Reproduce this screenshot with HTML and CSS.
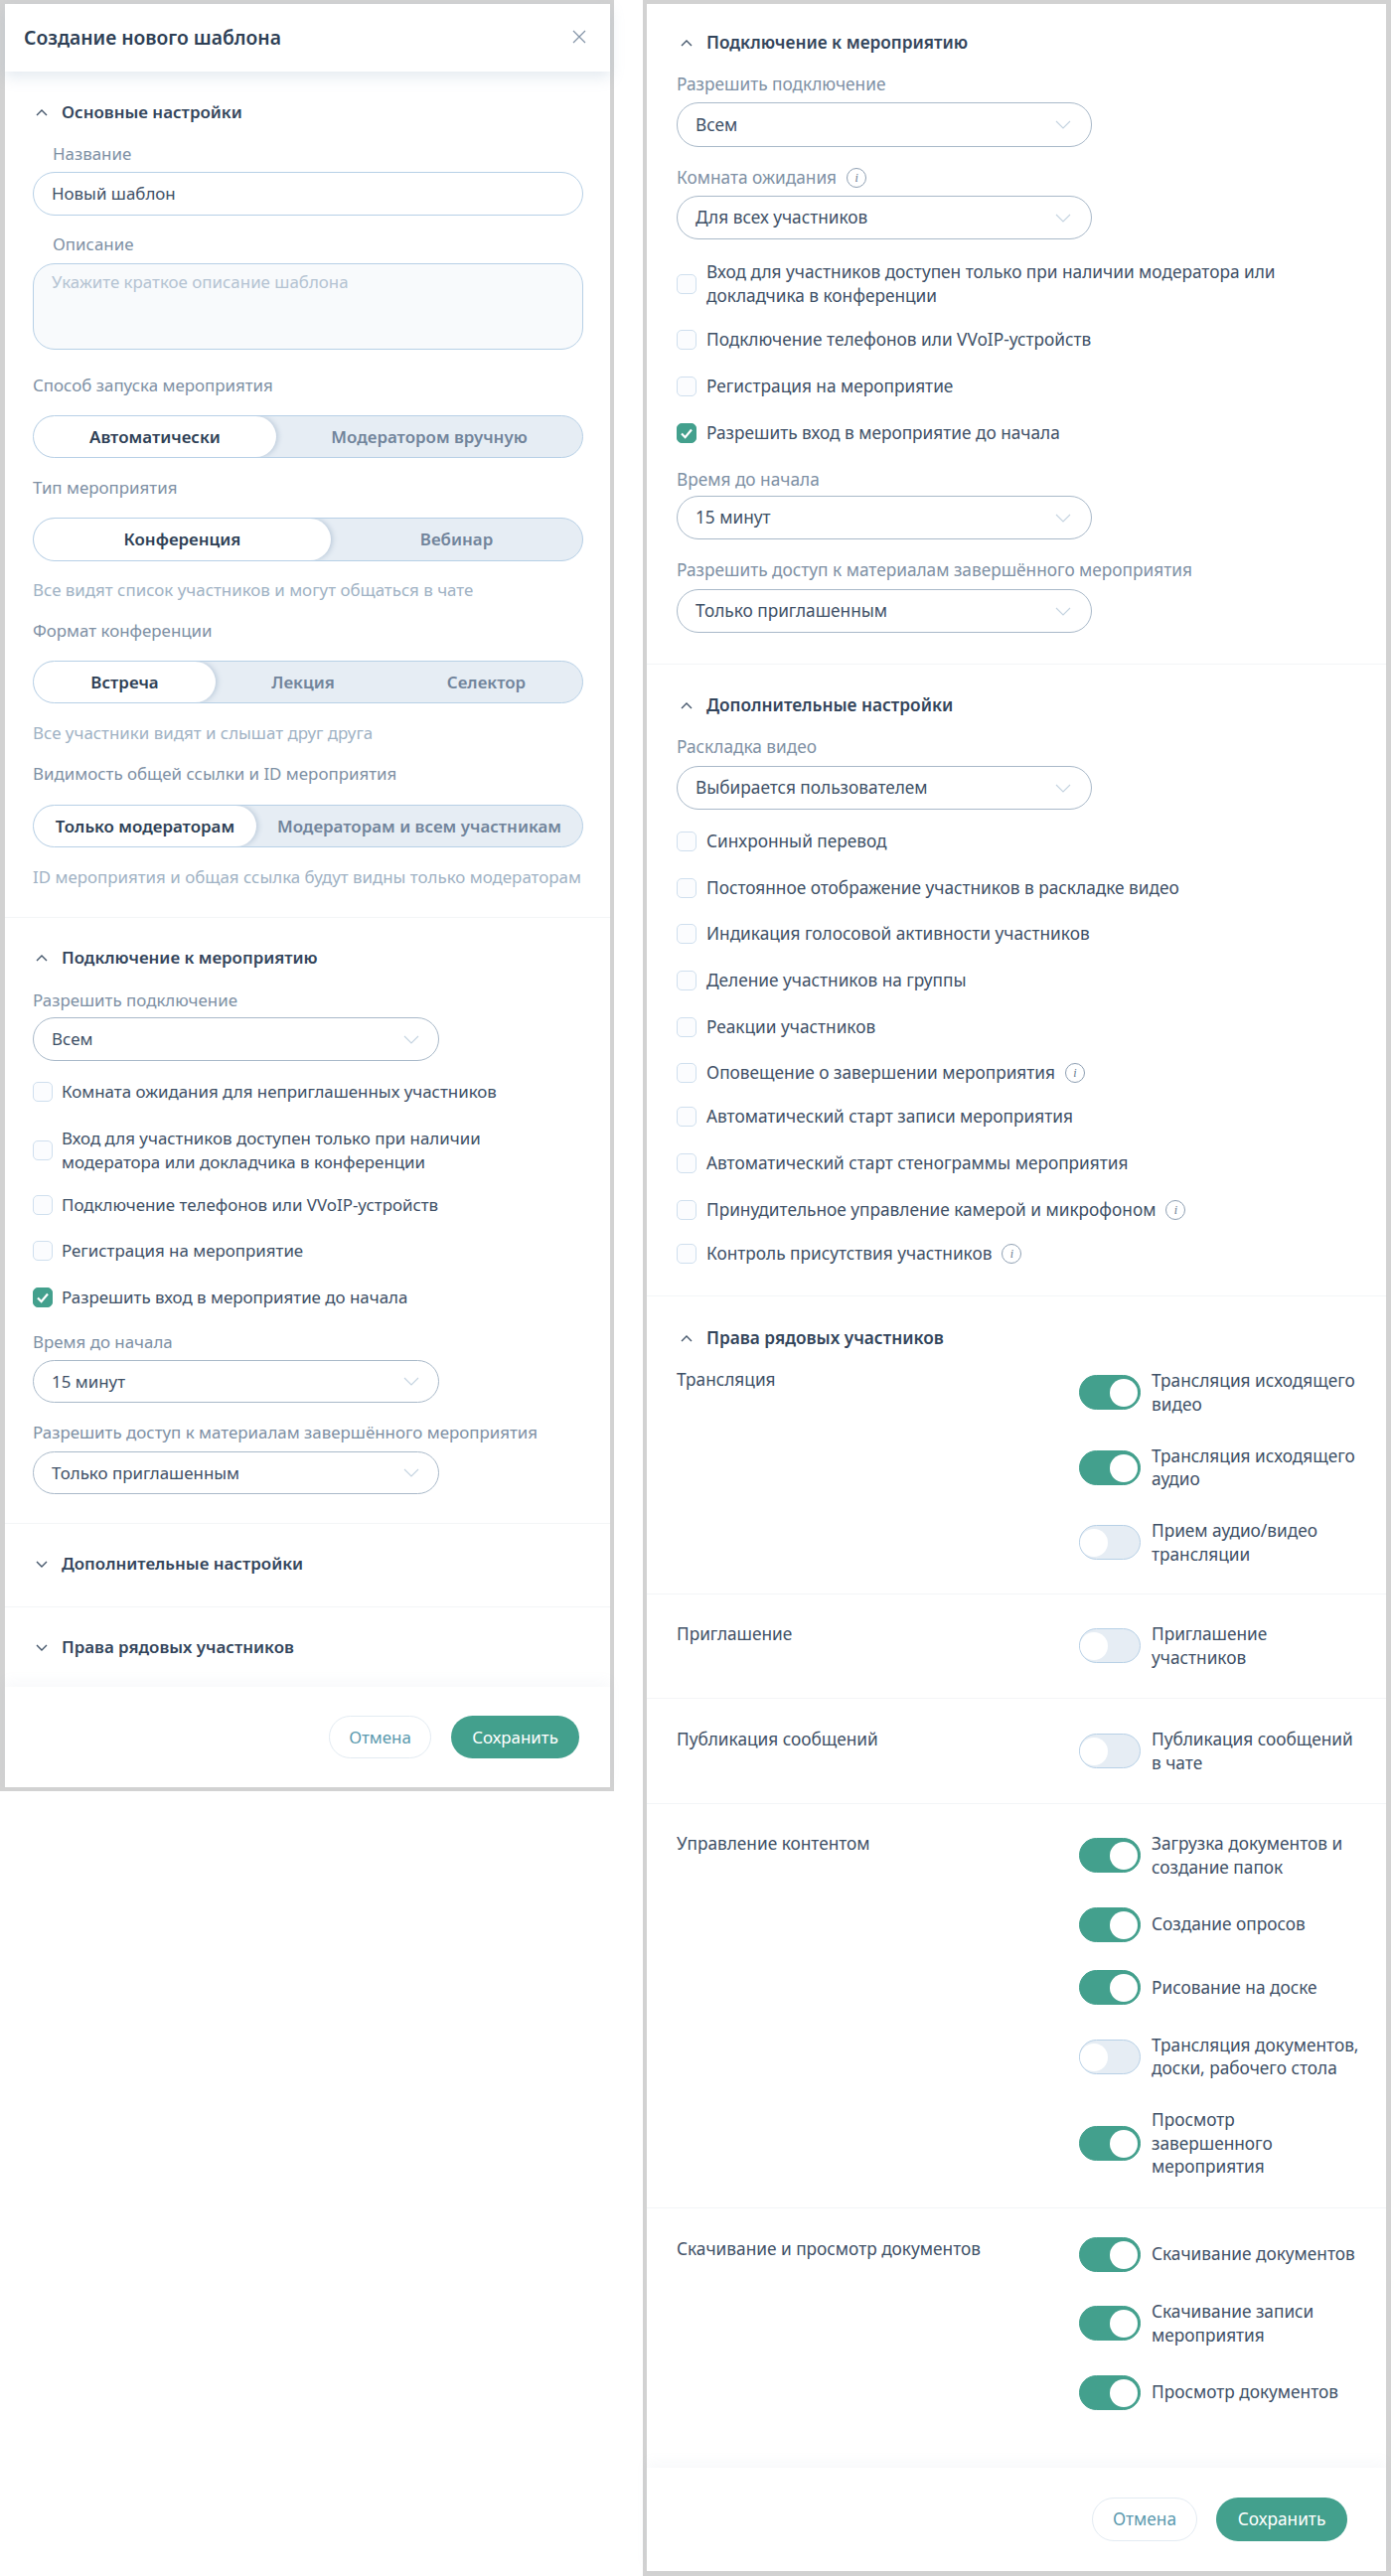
FILE: index.html
```html
<!DOCTYPE html>
<html lang="ru">
<head>
<meta charset="utf-8">
<title>Создание нового шаблона</title>
<link rel="stylesheet" href="styles.css">
</head>
<body>
<svg class="defs" width="0" height="0" aria-hidden="true">
  <symbol id="up" viewBox="0 0 12 7"><path d="M1 6 6 1l5 5" fill="none" stroke="currentColor" stroke-width="1.4"/></symbol>
  <symbol id="down" viewBox="0 0 12 7"><path d="M1 1l5 5 5-5" fill="none" stroke="currentColor" stroke-width="1.4"/></symbol>
  <symbol id="sel" viewBox="0 0 16 9"><path d="M1 1l7 7 7-7" fill="none" stroke="currentColor" stroke-width="1.1"/></symbol>
  <symbol id="tick" viewBox="0 0 20 20"><path d="M5 10.5 8.6 14.2 15 6.5" fill="none" stroke="#fff" stroke-width="2.2"/></symbol>
</svg>
<main class="page">

<section class="panel left">
  <header class="dlg-head">
    <h1>Создание нового шаблона</h1>
    <svg class="close" viewBox="0 0 14 14"><path d="M1 1l12 12M13 1 1 13" fill="none" stroke="currentColor" stroke-width="1.2"/></svg>
  </header>

  <div class="sec pt29 pb28 line">
    <div class="sec-head"><svg class="chev"><use href="#up"/></svg>Основные настройки</div>
    <div class="lbl indent m18">Название</div>
    <div class="input m6">Новый шаблон</div>
    <div class="lbl indent m17">Описание</div>
    <div class="area m7">Укажите краткое описание шаблона</div>
    <div class="lbl m24">Способ запуска мероприятия</div>
    <div class="seg m18 h43"><div class="opt on w244">Автоматически</div><div class="opt fill">Модератором вручную</div></div>
    <div class="lbl m18">Тип мероприятия</div>
    <div class="seg m18"><div class="opt on w299">Конференция</div><div class="opt fill">Вебинар</div></div>
    <div class="hint m17">Все видят список участников и могут общаться в чате</div>
    <div class="lbl m17">Формат конференции</div>
    <div class="seg m18 h43"><div class="opt on w183">Встреча</div><div class="opt w176">Лекция</div><div class="opt fill">Селектор</div></div>
    <div class="hint m18">Все участники видят и слышат друг друга</div>
    <div class="lbl m17">Видимость общей ссылки и ID мероприятия</div>
    <div class="seg m19 h43"><div class="opt on w224">Только модераторам</div><div class="opt fill">Модераторам и всем участникам</div></div>
    <div class="hint m18">ID мероприятия и общая ссылка будут видны только модераторам</div>
  </div>

  <div class="sec pt28 pb29 line">
    <div class="sec-head"><svg class="chev"><use href="#up"/></svg>Подключение к мероприятию</div>
    <div class="lbl m19">Разрешить подключение</div>
    <div class="select m5">Всем<svg class="sel"><use href="#sel"/></svg></div>
    <div class="cb m19"><span class="box"></span><span>Комната ожидания для неприглашенных участников</span></div>
    <div class="cb m23"><span class="box"></span><span>Вход для участников доступен только при наличии<br>модератора или докладчика в конференции</span></div>
    <div class="cb m19"><span class="box"></span><span>Подключение телефонов или VVoIP-устройств</span></div>
    <div class="cb m22"><span class="box"></span><span>Регистрация на мероприятие</span></div>
    <div class="cb m23"><span class="box checked"><svg><use href="#tick"/></svg></span><span>Разрешить вход в мероприятие до начала</span></div>
    <div class="lbl m21">Время до начала</div>
    <div class="select m6 h43">15 минут<svg class="sel"><use href="#sel"/></svg></div>
    <div class="lbl m18">Разрешить доступ к материалам завершённого мероприятия</div>
    <div class="select m7 h43">Только приглашенным<svg class="sel"><use href="#sel"/></svg></div>
  </div>

  <div class="sec pt28 pb31 line">
    <div class="sec-head"><svg class="chev"><use href="#down"/></svg>Дополнительные настройки</div>
  </div>
  <div class="sec pt28 pb28">
    <div class="sec-head"><svg class="chev"><use href="#down"/></svg>Права рядовых участников</div>
  </div>

  <footer class="dlg-foot">
    <button class="btn ghost">Отмена</button>
    <button class="btn primary">Сохранить</button>
  </footer>
</section>

<section class="panel right">
  <div class="sec pt27 pb31 line">
    <div class="sec-head"><svg class="chev"><use href="#up"/></svg>Подключение к мероприятию</div>
    <div class="lbl m18">Разрешить подключение</div>
    <div class="select m6 h45">Всем<svg class="sel"><use href="#sel"/></svg></div>
    <div class="lbl m19">Комната ожидания <span class="info">i</span></div>
    <div class="select m6">Для всех участников<svg class="sel"><use href="#sel"/></svg></div>
    <div class="cb m21"><span class="box"></span><span>Вход для участников доступен только при наличии модератора или<br>докладчика в конференции</span></div>
    <div class="cb m20"><span class="box"></span><span>Подключение телефонов или VVoIP-устройств</span></div>
    <div class="cb m23"><span class="box"></span><span>Регистрация на мероприятие</span></div>
    <div class="cb m23"><span class="box checked"><svg><use href="#tick"/></svg></span><span>Разрешить вход в мероприятие до начала</span></div>
    <div class="lbl m23">Время до начала</div>
    <div class="select m4">15 минут<svg class="sel"><use href="#sel"/></svg></div>
    <div class="lbl m19">Разрешить доступ к материалам завершённого мероприятия</div>
    <div class="select m7">Только приглашенным<svg class="sel"><use href="#sel"/></svg></div>
  </div>

  <div class="sec pt29 pb30 line">
    <div class="sec-head"><svg class="chev"><use href="#up"/></svg>Дополнительные настройки</div>
    <div class="lbl m18">Раскладка видео</div>
    <div class="select m7">Выбирается пользователем<svg class="sel"><use href="#sel"/></svg></div>
    <div class="cb m20"><span class="box"></span><span>Синхронный перевод</span></div>
    <div class="cb m23"><span class="box"></span><span>Постоянное отображение участников в раскладке видео</span></div>
    <div class="cb m22"><span class="box"></span><span>Индикация голосовой активности участников</span></div>
    <div class="cb m23"><span class="box"></span><span>Деление участников на группы</span></div>
    <div class="cb m23"><span class="box"></span><span>Реакции участников</span></div>
    <div class="cb m22"><span class="box"></span><span>Оповещение о завершении мероприятия</span><span class="info">i</span></div>
    <div class="cb m20"><span class="box"></span><span>Автоматический старт записи мероприятия</span></div>
    <div class="cb m23"><span class="box"></span><span>Автоматический старт стенограммы мероприятия</span></div>
    <div class="cb m23"><span class="box"></span><span>Принудительное управление камерой и микрофоном</span><span class="info">i</span></div>
    <div class="cb m20"><span class="box"></span><span>Контроль присутствия участников</span><span class="info">i</span></div>
  </div>

  <div class="sec pt30">
    <div class="sec-head"><svg class="chev"><use href="#up"/></svg>Права рядовых участников</div>
  </div>

  <div class="perm first line">
    <div class="perm-name">Трансляция</div>
    <div class="perm-list">
      <div class="item"><span class="tg on"></span><span>Трансляция исходящего<br>видео</span></div>
      <div class="item"><span class="tg on"></span><span>Трансляция исходящего<br>аудио</span></div>
      <div class="item"><span class="tg"></span><span>Прием аудио/видео<br>трансляции</span></div>
    </div>
  </div>
  <div class="perm line">
    <div class="perm-name">Приглашение</div>
    <div class="perm-list">
      <div class="item"><span class="tg"></span><span>Приглашение<br>участников</span></div>
    </div>
  </div>
  <div class="perm roomy line">
    <div class="perm-name">Публикация сообщений</div>
    <div class="perm-list">
      <div class="item"><span class="tg"></span><span>Публикация сообщений<br>в чате</span></div>
    </div>
  </div>
  <div class="perm line">
    <div class="perm-name">Управление контентом</div>
    <div class="perm-list">
      <div class="item"><span class="tg on"></span><span>Загрузка документов и<br>создание папок</span></div>
      <div class="item"><span class="tg on"></span><span>Создание опросов</span></div>
      <div class="item"><span class="tg on"></span><span>Рисование на доске</span></div>
      <div class="item"><span class="tg"></span><span>Трансляция документов,<br>доски, рабочего стола</span></div>
      <div class="item"><span class="tg on"></span><span>Просмотр<br>завершенного<br>мероприятия</span></div>
    </div>
  </div>
  <div class="perm last">
    <div class="perm-name">Скачивание и просмотр документов</div>
    <div class="perm-list">
      <div class="item"><span class="tg on"></span><span>Скачивание документов</span></div>
      <div class="item"><span class="tg on"></span><span>Скачивание записи<br>мероприятия</span></div>
      <div class="item"><span class="tg on"></span><span>Просмотр документов</span></div>
    </div>
  </div>

  <footer class="dlg-foot">
    <button class="btn ghost">Отмена</button>
    <button class="btn primary">Сохранить</button>
  </footer>
</section>

</main>
</body>
</html>
```
FILE: styles.css
```css
* { box-sizing: border-box; }
html, body { margin: 0; padding: 0; background: #fff; }
body { font-family: "Noto Sans", "Open Sans", sans-serif; color: #3e5066; font-size: 16px; line-height: 24px; }
.defs { position: absolute; }
.page { display: flex; align-items: flex-start; width: 1400px; height: 2593px; overflow: hidden; }

.panel { border: 4px solid #d2d2d2; background: #fff; }
.left { width: 618px; border-left-width: 5px; font-size: 16.9px; }
.right { width: 753px; margin-left: 29px; font-size: 17.25px; border-right-width: 5px; border-bottom-width: 5px; }

.dlg-head { position: relative; z-index: 1; height: 68px; display: flex; align-items: center; justify-content: space-between; padding: 0 24px 0 19px; background: #fff; box-shadow: 0 6px 14px rgba(125, 155, 185, .2); }
.dlg-head h1 { margin: 0; font-size: 19.3px; font-weight: 600; color: #2e3f55; line-height: 28px; }
.close { width: 14px; height: 14px; color: #8394a7; margin-top: -2px; }

.sec { padding-left: 28px; padding-right: 27px; }
.right .sec { padding-left: 30px; padding-right: 30px; }
.line { border-bottom: 1px solid #f3f5f7; }
.sec-head { display: flex; align-items: center; height: 24px; font-weight: 600; color: #33455b; }
.chev { width: 12px; height: 7px; margin: 0 14px 0 3px; color: #44566b; flex: none; }
.right .chev { margin-left: 4px; }

.lbl { color: #7e90a4; height: 24px; display: flex; align-items: center; white-space: nowrap; }
.indent { padding-left: 20px; }
.hint { color: #a0b2c4; height: 24px; white-space: nowrap; }

.input, .select { height: 44px; border-radius: 22px; display: flex; align-items: center; padding-left: 18px; background: #fff; color: #3e5066; }
.input { border: 1px solid #b7d0e6; }
.select { position: relative; border: 1px solid #a9b9c9; width: 409px; justify-content: space-between; padding-right: 19px; }
.right .select { width: 418px; padding-right: 20px; }
.sel { width: 16px; height: 9px; color: #c4d3e0; flex: none; }
.area { height: 87px; border: 1px solid #b7d0e6; border-radius: 22px; background: #f8fafc; color: #b4c3d2; padding: 6px 18px; }

.seg { height: 44px; display: flex; border: 1px solid #b7d0e6; border-radius: 22px; background: #e6edf4; overflow: hidden; font-weight: 600; color: #71849b; }
.opt { display: flex; align-items: center; justify-content: center; white-space: nowrap; flex: none; }
.opt.on { background: #fff; color: #2e3f55; border-radius: 22px; box-shadow: 2px 0 5px rgba(140, 165, 190, .45); position: relative; }
.fill { flex: 1; }
.w244 { width: 244px; } .w299 { width: 299px; } .w183 { width: 183px; } .w176 { width: 176px; } .w224 { width: 224px; }

.cb { display: flex; align-items: center; min-height: 24px; white-space: nowrap; }
.box { width: 20px; height: 20px; flex: none; margin-right: 9px; border: 1px solid #cfdfee; border-radius: 5px; background: #fbfcfe; }
.right .box { margin-right: 10px; }
.box.checked { background: #43a08d; border-color: #43a08d; position: relative; }
.box svg { position: absolute; left: -1px; top: -1px; width: 20px; height: 20px; }

.info { display: inline-flex; align-items: center; justify-content: center; width: 20px; height: 20px; border: 1px solid #8fa0b3; border-radius: 50%; font-family: "Liberation Serif", serif; font-style: italic; font-size: 12px; line-height: 1; color: #66788d; margin-left: 10px; flex: none; }

.perm { display: flex; padding: 28px 30px 29px; }
.perm.first { padding-top: 19px; padding-bottom: 28px; }
.first .perm-name { margin-top: -1px; }
.perm.roomy { padding-top: 29px; }
.perm.last { padding-top: 29px; padding-bottom: 58px; }
.perm-name { width: 405px; flex: none; height: 24px; white-space: nowrap; }
.perm-list { display: flex; flex-direction: column; gap: 28.5px; }
.item { display: flex; align-items: center; gap: 11px; line-height: 23.5px; white-space: nowrap; min-height: 35px; }
.tg { width: 62px; height: 35px; flex: none; border: 1px solid #b7d0e6; border-radius: 18px; background: #e6edf4; position: relative; }
.tg::after { content: ""; position: absolute; left: 0; top: 3px; width: 28px; height: 28px; border-radius: 50%; background: #fff; }
.tg.on { background: #43a08d; border-color: #43a08d; }
.tg.on::after { left: auto; right: 2px; }

.dlg-foot { position: relative; display: flex; justify-content: flex-end; gap: 20px; background: #fff; padding: 29px 31px 29px 0; box-shadow: 0 -6px 12px rgba(135, 160, 190, .06); }
.right .dlg-foot { gap: 19px; padding: 30px 39px 30px 0; }
.btn { height: 43px; border-radius: 22px; font: inherit; cursor: pointer; }
.right .btn { height: 44px; }
.ghost { width: 103px; background: #fff; border: 1px solid #e3ebf2; color: #5b9aae; }
.primary { width: 129px; background: #43a08d; border: 0; color: #fff; }
.right .ghost { width: 106px; }
.right .primary { width: 132px; }

.pt27 { padding-top: 27px; } .pt28 { padding-top: 28px; } .pt29 { padding-top: 29px; } .pt30 { padding-top: 30px; }
.pb28 { padding-bottom: 28px; } .pb29 { padding-bottom: 29px; } .pb30 { padding-bottom: 30px; } .pb31 { padding-bottom: 31px; }
.m4 { margin-top: 4px; } .m5 { margin-top: 5px; } .m6 { margin-top: 6px; } .m7 { margin-top: 7px; }
.m17 { margin-top: 17px; } .m18 { margin-top: 18px; } .m19 { margin-top: 19px; } .m20 { margin-top: 20px; }
.m21 { margin-top: 21px; } .m22 { margin-top: 22px; } .m23 { margin-top: 23px; } .m24 { margin-top: 24px; }
.h43 { height: 43px; } .h45 { height: 45px; }
```
